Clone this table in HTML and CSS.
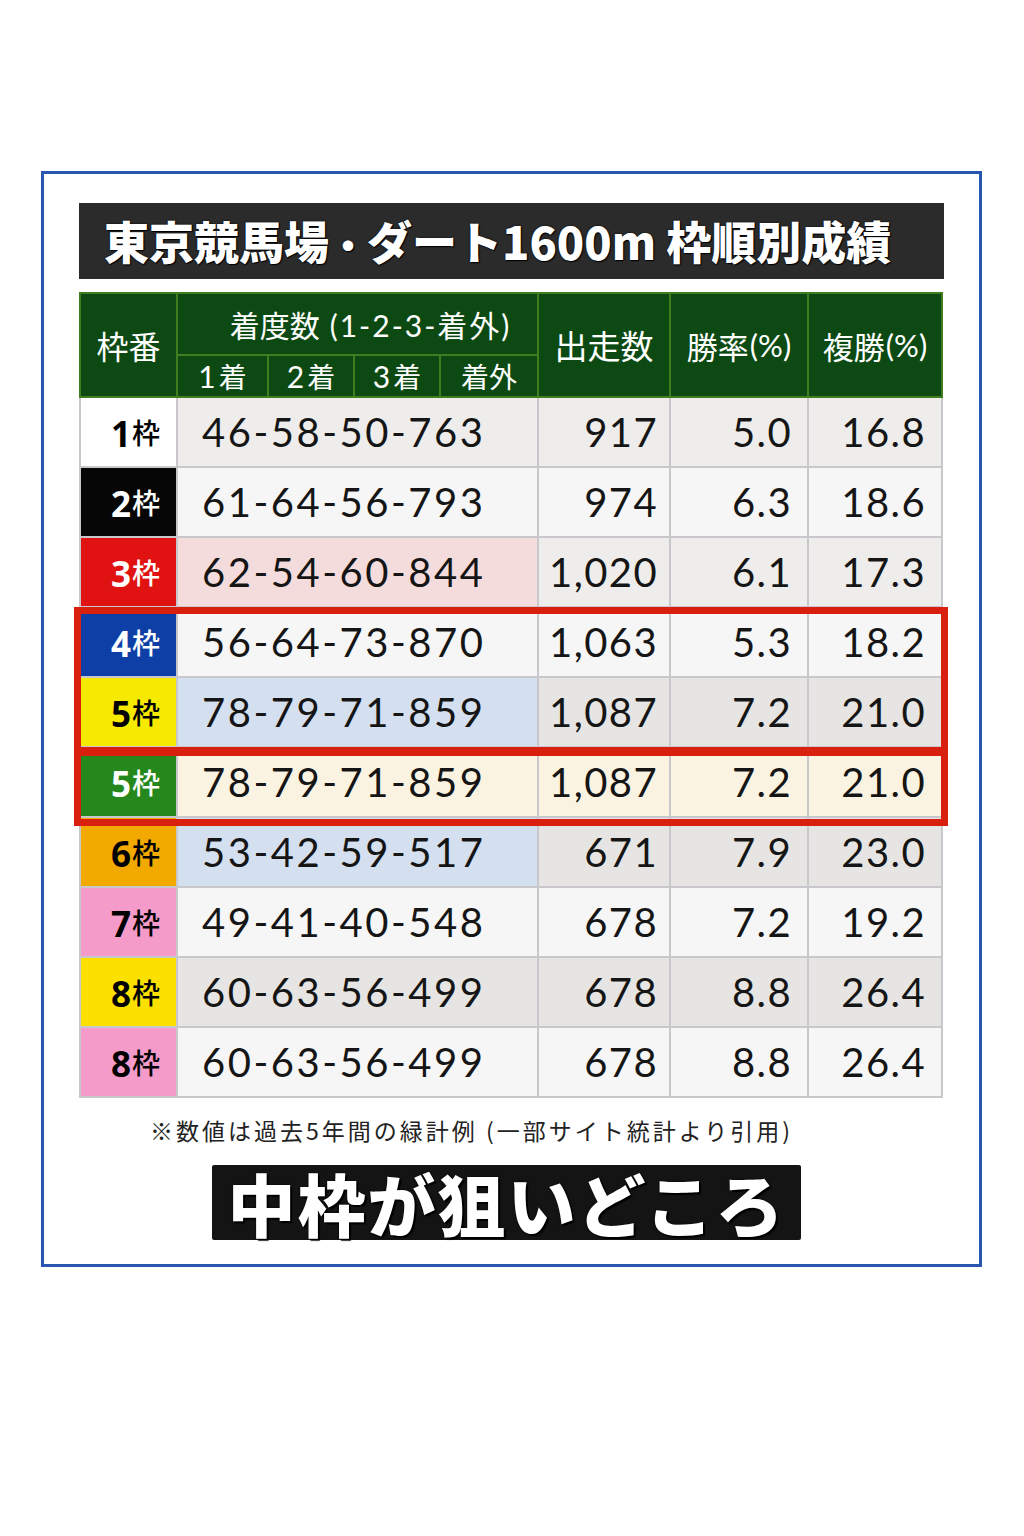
FILE: index.html
```html
<!DOCTYPE html>
<html lang="ja">
<head>
<meta charset="utf-8">
<title>東京競馬場・ダート1600m 枠順別成績</title>
<link rel="stylesheet" href="styles.css">
</head>
<body>
<div class="frame">
  <div class="title">東京競馬場<span class="dot">・</span>ダート1600m 枠順別成績</div>
  <div class="table">
    <div class="thead">
      <div class="th th-waku">枠番</div>
      <div class="th-group">
        <div class="th-top">着度数 <span class="paren">(1-2-3-着外)</span></div>
        <div class="th-sub">
          <div class="sub"><span class="d">1</span>着</div>
          <div class="sub"><span class="d">2</span>着</div>
          <div class="sub"><span class="d">3</span>着</div>
          <div class="sub">着外</div>
        </div>
      </div>
      <div class="th">出走数</div>
      <div class="th th-rate">勝率<span class="pct">(%)</span></div>
      <div class="th th-rate">複勝<span class="pct">(%)</span></div>
    </div>
    <div class="tbody">
      <div class="row r-white">
        <div class="lab lab-1"><span class="n">1</span>枠</div>
        <div class="rec c-gray">46-58-50-763</div>
        <div class="num c-gray">917</div>
        <div class="num c-gray">5.0</div>
        <div class="num c-gray">16.8</div>
      </div>
      <div class="row">
        <div class="lab lab-2"><span class="n">2</span>枠</div>
        <div class="rec c-white">61-64-56-793</div>
        <div class="num c-white">974</div>
        <div class="num c-white">6.3</div>
        <div class="num c-white">18.6</div>
      </div>
      <div class="row">
        <div class="lab lab-3"><span class="n">3</span>枠</div>
        <div class="rec c-pink">62-54-60-844</div>
        <div class="num c-gray">1,020</div>
        <div class="num c-gray">6.1</div>
        <div class="num c-gray">17.3</div>
      </div>
      <div class="hl hl-a">
        <div class="row">
          <div class="lab lab-4"><span class="n">4</span>枠</div>
          <div class="rec c-white">56-64-73-870</div>
          <div class="num c-white">1,063</div>
          <div class="num c-white">5.3</div>
          <div class="num c-white">18.2</div>
        </div>
        <div class="row">
          <div class="lab lab-5"><span class="n">5</span>枠</div>
          <div class="rec c-blue">78-79-71-859</div>
          <div class="num c-gray2">1,087</div>
          <div class="num c-gray2">7.2</div>
          <div class="num c-gray2">21.0</div>
        </div>
      </div>
      <div class="hl hl-b">
        <div class="row">
          <div class="lab lab-5g"><span class="n">5</span>枠</div>
          <div class="rec c-cream">78-79-71-859</div>
          <div class="num c-cream">1,087</div>
          <div class="num c-cream">7.2</div>
          <div class="num c-cream">21.0</div>
        </div>
      </div>
      <div class="row">
        <div class="lab lab-6"><span class="n">6</span>枠</div>
        <div class="rec c-blue">53-42-59-517</div>
        <div class="num c-gray2">671</div>
        <div class="num c-gray2">7.9</div>
        <div class="num c-gray2">23.0</div>
      </div>
      <div class="row">
        <div class="lab lab-7"><span class="n">7</span>枠</div>
        <div class="rec c-white">49-41-40-548</div>
        <div class="num c-white">678</div>
        <div class="num c-white">7.2</div>
        <div class="num c-white">19.2</div>
      </div>
      <div class="row">
        <div class="lab lab-8y"><span class="n">8</span>枠</div>
        <div class="rec c-gray2">60-63-56-499</div>
        <div class="num c-gray2">678</div>
        <div class="num c-gray2">8.8</div>
        <div class="num c-gray2">26.4</div>
      </div>
      <div class="row">
        <div class="lab lab-8p"><span class="n">8</span>枠</div>
        <div class="rec c-white">60-63-56-499</div>
        <div class="num c-white">678</div>
        <div class="num c-white">8.8</div>
        <div class="num c-white">26.4</div>
      </div>
    </div>
  </div>
  <p class="note">※数値は過去5年間の緑計例 (一部サイト統計より引用)</p>
  <div class="banner-wrap">
    <div class="banner">中枠が狙いどころ</div>
  </div>
</div>
</body>
</html>
```

FILE: styles.css
```css
* { box-sizing: border-box; }

html, body {
  margin: 0;
  padding: 0;
  background: #ffffff;
}

body {
  font-family: "Noto Sans CJK JP", "Noto Sans", sans-serif;
  color: #111;
}

.frame {
  margin: 171px 0 0 41px;
  width: 941px;
  height: 1096px;
  border: 3px solid #2856b0;
  background: #ffffff;
  padding: 29px 35px 0 35px;
}

.title {
  height: 76px;
  width: 865px;
  background: #2b2b2b;
  color: #ffffff;
  font-family: "Noto Sans CJK JP", sans-serif;
  font-weight: 900;
  font-size: 45px;
  line-height: 76px;
  padding-left: 25px;
  text-shadow: 0 0 2px #000, 1px 1px 1px #000;
  white-space: nowrap;
}

.title .dot {
  font-size: 38px;
}

.table {
  margin-top: 13px;
  width: 864px;
}

/* header */
.thead {
  display: grid;
  grid-template-columns: 95px 361px 132px 138px 134px;
  height: 106px;
  background: #0d4a13;
  border: 2px solid #3f7d1f;
  color: #ffffff;
}

.th {
  display: flex;
  align-items: center;
  justify-content: center;
  font-size: 33px;
  font-weight: 400;
  border-left: 2px solid #3f7d1f;
  white-space: nowrap;
}

.th-rate {
  font-size: 31px;
}

.th-waku {
  border-left: none;
  font-size: 32px;
}

.th .pct {
  font-family: "Lato", sans-serif;
  font-size: 31px;
  margin-left: 1px;
}

.th-group {
  display: flex;
  flex-direction: column;
  border-left: 2px solid #3f7d1f;
}

.th-top {
  height: 60px;
  display: flex;
  align-items: center;
  justify-content: center;
  padding-left: 26px;
  font-size: 30px;
  white-space: nowrap;
}

.th-top .paren {
  margin-left: 10px;
  font-family: "Lato", "Noto Sans CJK JP", sans-serif;
  letter-spacing: 2px;
}

.th-sub {
  flex: 1;
  display: grid;
  grid-template-columns: 89px 86px 86px 1fr;
  border-top: 2px solid #3f7d1f;
}

.sub {
  display: flex;
  align-items: center;
  justify-content: center;
  font-size: 28px;
  border-left: 2px solid #3f7d1f;
}

.sub:first-child { border-left: none; }

.sub .d {
  font-family: "Lato", sans-serif;
  font-size: 30px;
  margin-right: 3px;
}

/* body */
.tbody {
  border-left: 2px solid #c7c7cc;
  border-right: 2px solid #c7c7cc;
}

.row {
  display: grid;
  grid-template-columns: 95px 361px 132px 138px 134px;
  height: 70px;
  border-bottom: 2px solid #c7c7cc;
}

.row > div {
  display: flex;
  align-items: center;
}

.row > div + div {
  border-left: 2px solid #c7c7cc;
}

.lab {
  justify-content: flex-end;
  padding-right: 16px;
  font-size: 28px;
  font-weight: 500;
}

.lab .n {
  font-family: "Open Sans", sans-serif;
  font-weight: 700;
  font-size: 35px;
  margin-right: 1px;
  position: relative;
  top: 1px;
}

.rec {
  padding-left: 24px;
  font-family: "Lato", sans-serif;
  font-size: 40px;
  letter-spacing: 2.5px;
  color: #151515;
}

.num {
  justify-content: flex-end;
  padding-right: 11px;
  font-family: "Lato", sans-serif;
  font-size: 40px;
  letter-spacing: 1.4px;
  color: #151515;
}

.num:nth-child(4),
.num:nth-child(5) {
  padding-right: 15px;
}

/* label colours */
.lab-1 { background: #ffffff; color: #000; }
.lab-2 { background: #060606; color: #fff; }
.lab-3 { background: #e01212; color: #fff; }
.lab-4 { background: #0d3fa6; color: #fff; }
.lab-5 { background: #f6ea00; color: #000; }
.lab-5g { background: #24881c; color: #fff; }
.lab-6 { background: #f2a900; color: #000; }
.lab-7 { background: #f59bc9; color: #000; }
.lab-8y { background: #fbe000; color: #000; }
.lab-8p { background: #f59bc9; color: #000; }

/* cell colours */
.c-gray { background: #eeedeb; }
.c-gray2 { background: #e6e5e3; }
.c-white { background: #f6f6f6; }
.c-pink { background: #f5dcdc; }
.c-blue { background: #d4dff0; }
.c-cream { background: #fbf3e2; }

/* highlight boxes */
.hl {
  position: relative;
}

.hl::after {
  content: "";
  position: absolute;
  top: -1px;
  bottom: -8px;
  left: -7px;
  right: -7px;
  border: 7px solid #d9200f;
  pointer-events: none;
  z-index: 2;
}

.note {
  margin: 17px 0 0 71px;
  font-size: 23px;
  line-height: 30px;
  color: #222;
  letter-spacing: 3px;
  white-space: nowrap;
}

.banner-wrap {
  display: flex;
  justify-content: center;
  margin-top: 20px;
  padding-right: 10px;
}

.banner {
  width: 589px;
  height: 75px;
  background: #141414;
  border-radius: 2px;
  color: #ffffff;
  font-weight: 900;
  font-size: 68px;
  line-height: 75px;
  letter-spacing: 2px;
  text-align: center;
  white-space: nowrap;
  text-shadow: 0 0 2px #000, 2px 2px 1px #000;
}
```
